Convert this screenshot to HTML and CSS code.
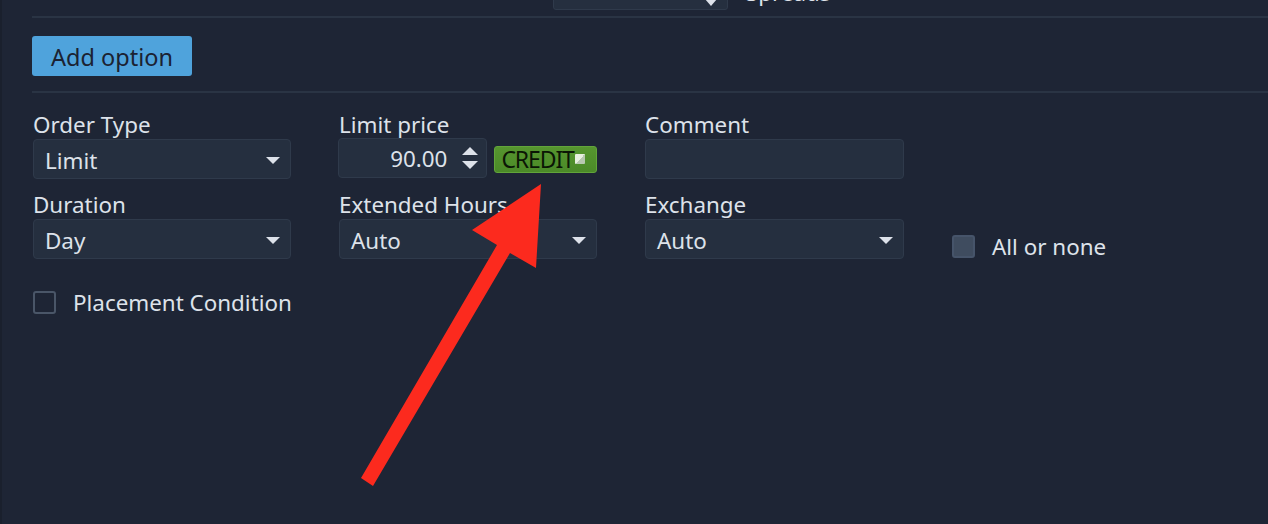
FILE: index.html
```html
<!DOCTYPE html>
<html>
<head>
<meta charset="utf-8">
<link rel="stylesheet" href="styles.css">
</head>
<body>
<div class="page">
  <div class="top-row">
    <div class="mini-select"><span class="mini-caret"></span></div>
    <span class="top-label">Spreads</span>
  </div>
  <div class="divider"></div>
  <div class="actions">
    <button class="btn-add">Add option</button>
  </div>
  <div class="divider"></div>
  <div class="form">
    <div class="field">
      <div class="label">Order Type</div>
      <div class="select"><span>Limit</span><span class="caret"></span></div>
    </div>
    <div class="field">
      <div class="label">Limit price</div>
      <div class="price-row">
        <div class="number">
          <span class="num-val">90.00</span>
          <span class="spin"><span class="up"></span><span class="down"></span></span>
        </div>
        <div class="credit"><span class="credit-txt">CREDIT</span><span class="credit-ico"></span></div>
      </div>
    </div>
    <div class="field">
      <div class="label">Comment</div>
      <div class="select input"></div>
    </div>
    <div class="field empty"></div>

    <div class="field">
      <div class="label">Duration</div>
      <div class="select"><span>Day</span><span class="caret"></span></div>
    </div>
    <div class="field">
      <div class="label">Extended Hours</div>
      <div class="select"><span>Auto</span><span class="caret"></span></div>
    </div>
    <div class="field">
      <div class="label">Exchange</div>
      <div class="select"><span>Auto</span><span class="caret"></span></div>
    </div>
    <div class="field check-cell">
      <label class="check"><span class="box filled"></span>All or none</label>
    </div>
  </div>
  <label class="check placement"><span class="box"></span>Placement Condition</label>

  <svg class="arrow" width="1268" height="524" viewBox="0 0 1268 524">
    <polygon fill="#fc2a1e" points="539,184 534,268 508,253 371,486 359,478 495,245 470,230"/>
  </svg>
</div>
</body>
</html>
```

FILE: styles.css
```css
* { box-sizing: border-box; }
html, body { margin: 0; padding: 0; }
body {
  background: #1e2535;
  font-family: "Noto Sans", "Open Sans", sans-serif;
  color: #dde2ea;
}
.page {
  position: relative;
  width: 1268px;
  height: 524px;
  overflow: hidden;
  padding-left: 30px;
  border-left: 2px solid #1a202d;
}
.top-row {
  height: 16px;
  display: flex;
  align-items: flex-end;
  overflow: hidden;
  padding-left: 521px;
}
.mini-select {
  position: relative;
  width: 175px;
  height: 40px;
  margin-bottom: 6px;
  background: #252f3f;
  border: 1px solid #2f3a4b;
  border-radius: 3px;
}
.mini-caret {
  position: absolute;
  right: 10px;
  top: 28px;
  width: 0; height: 0;
  border-left: 6px solid transparent;
  border-right: 6px solid transparent;
  border-top: 7px solid #dde2ea;
}
.top-label {
  font-size: 22.4px;
  line-height: 22px;
  margin-left: 18px;
  margin-bottom: 12px;
}
.divider {
  height: 2px;
  background: #2a3444;
}
.actions {
  padding: 18px 0 15px;
}
.btn-add {
  display: block;
  width: 160px;
  height: 40px;
  background: #4fa3dc;
  border: none;
  border-radius: 3px;
  color: #1b2232;
  font-family: "Noto Sans", "Open Sans", sans-serif;
  font-size: 23.5px;
  padding: 2px 0 0;
}
.form {
  display: grid;
  grid-template-columns: 258px 258px 259px auto;
  column-gap: 48px;
  row-gap: 12px;
  padding-top: 18px;
  padding-left: 1px;
}
.label {
  font-size: 22.4px;
  line-height: 28px;
  height: 28px;
  white-space: nowrap;
}
.select {
  height: 40px;
  background: #252f3f;
  border: 1px solid #2f3a4b;
  border-radius: 4px;
  display: flex;
  align-items: center;
  justify-content: space-between;
  padding: 2px 10px 0 11px;
  font-size: 22.4px;
}
.caret {
  width: 0; height: 0;
  border-left: 7.5px solid transparent;
  border-right: 7.5px solid transparent;
  border-top: 7px solid #dde2ea;
}
.price-row {
  display: flex;
  align-items: center;
  height: 40px;
}
.number {
  width: 150px;
  height: 40px;
  margin-left: -1px;
  margin-top: -2px;
  background: #252f3f;
  border: 1px solid #2f3a4b;
  border-radius: 4px;
  display: flex;
  align-items: center;
  justify-content: flex-end;
  padding-right: 8px;
  font-size: 22.4px;
}
.num-val { margin-right: 15px; }
.spin {
  display: flex;
  flex-direction: column;
  gap: 6px;
}
.up, .down {
  width: 0; height: 0;
  border-left: 8px solid transparent;
  border-right: 8px solid transparent;
}
.up { border-bottom: 8px solid #dde2ea; }
.down { border-top: 8px solid #dde2ea; }
.credit {
  margin-left: 7px;
  width: 103px;
  height: 27px;
  background: linear-gradient(#56952f, #4b8a28);
  border: 1px solid #62a53a;
  border-radius: 3px;
  color: #0b1605;
  font-family: "Noto Sans", "Open Sans", sans-serif;
  font-size: 23px;
  line-height: 25px;
  padding-left: 6px;
  display: flex;
  align-items: center;
}
.credit-txt {
  letter-spacing: -1.1px;
  white-space: nowrap;
}
.credit-ico {
  flex: none;
  width: 10px;
  height: 10px;
  margin-left: 1px;
  margin-top: -1px;
  background: linear-gradient(135deg, #e8f0e0 50%, #b8c8b0 50%);
  border-radius: 1px;
}
.check-cell {
  display: flex;
  align-items: flex-end;
}
.check {
  display: flex;
  align-items: center;
  font-size: 22.4px;
  white-space: nowrap;
}
.check-cell .check { margin-bottom: -3px; }
.box {
  width: 23px;
  height: 23px;
  border: 2px solid #4a5668;
  border-radius: 3px;
  margin-right: 17px;
}
.box.filled {
  background: #3f4c5f;
  border-color: #46546a;
}
.placement {
  margin-top: 28px;
  padding-left: 1px;
}
.arrow {
  position: absolute;
  left: 0;
  top: 0;
}
```
